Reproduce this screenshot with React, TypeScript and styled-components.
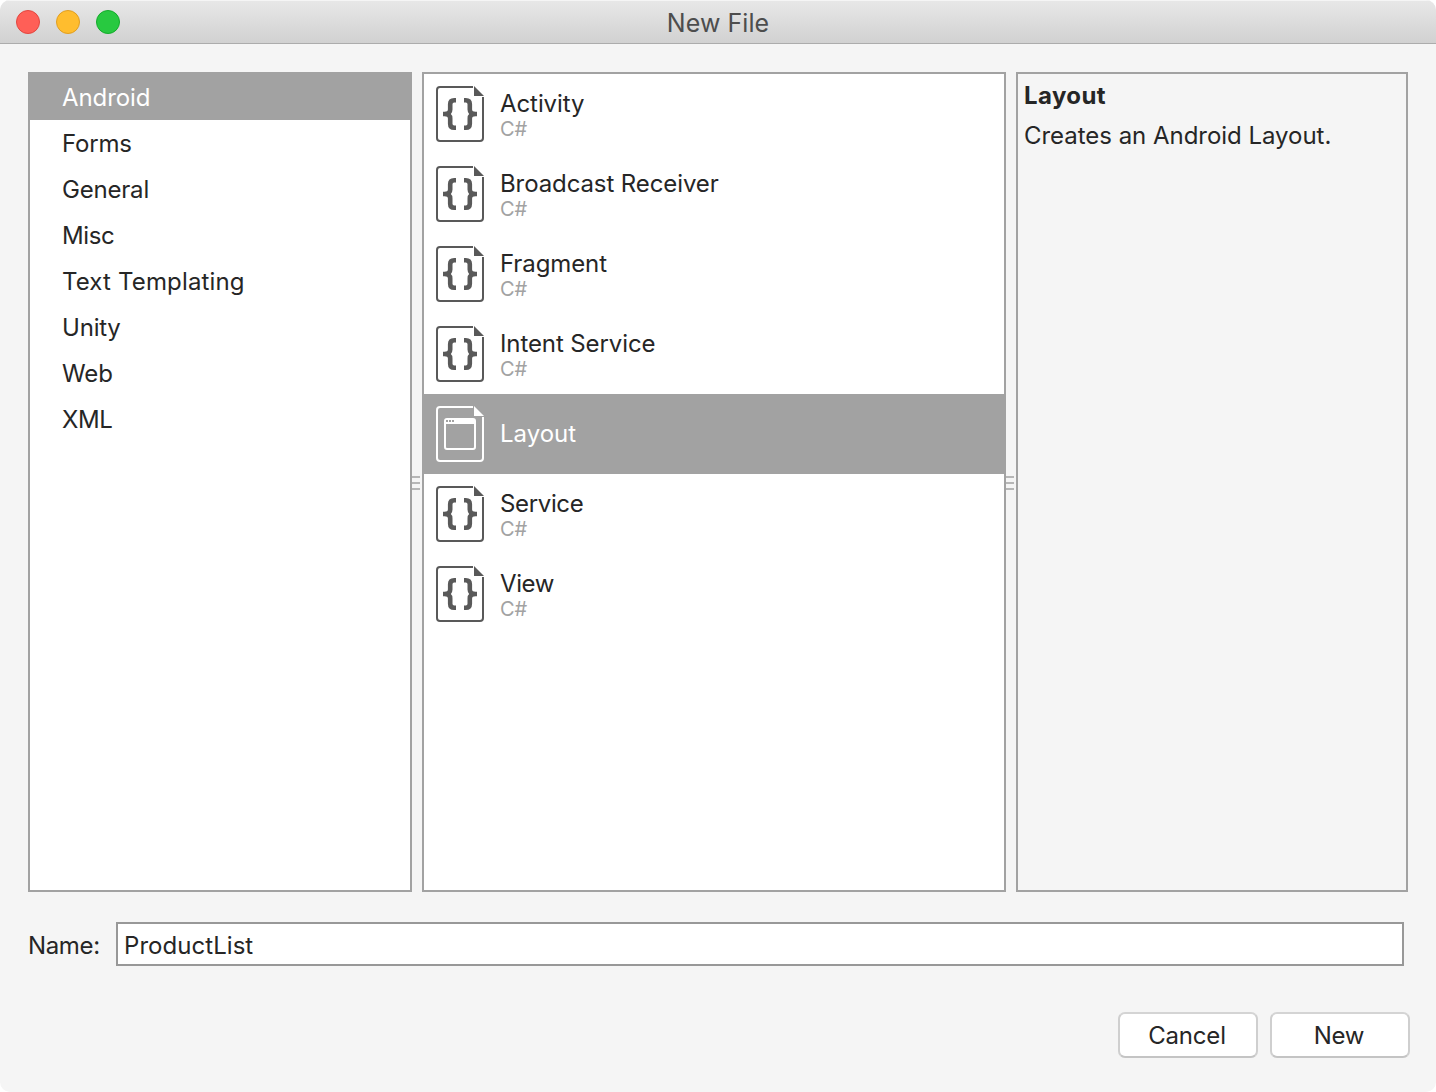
import React, { useState } from 'react';
import styled, { createGlobalStyle, css } from 'styled-components';

const GlobalStyle = createGlobalStyle`
  html, body { margin: 0; background: #fff; }
  *, *::before, *::after { box-sizing: border-box; }
`;

const Window = styled.div`
  display: flex;
  flex-direction: column;
  width: 1436px;
  height: 1092px;
  overflow: hidden;
  border-radius: 10px;
  background: #f5f5f5;
  color: #262626;
  font: 430 24px/30px Inter, sans-serif;
`;

const TitleBar = styled.header`
  display: grid;
  grid-template-columns: 1fr auto 1fr;
  align-items: center;
  flex: none;
  height: 44px;
  padding: 0 16px;
  border-bottom: 1px solid #acacac;
  background: linear-gradient(#e8e8e8, #d1d1d1);
  box-shadow: inset 0 1px #f5f5f5;
`;

const Lights = styled.div`
  display: flex;
  gap: 16px;
`;

const Light = styled.span<{ $fill: string; $edge: string }>`
  width: 24px;
  height: 24px;
  border-radius: 50%;
  border: 1px solid ${(p) => p.$edge};
  background: ${(p) => p.$fill};
`;

const Label = styled.span<{ $spacing?: number }>`
  white-space: nowrap;
  letter-spacing: ${(p) => p.$spacing ?? 0}px;
`;

const Title = styled.h1`
  margin: 2px 0 0;
  font-size: 25px;
  line-height: 30px;
  font-weight: 430;
  color: #4d4d4d;
`;

const Panels = styled.main`
  display: flex;
  flex: none;
  height: 820px;
  margin: 28px 28px 0;
`;

const Panel = styled.section<{ $width: number; $plain?: boolean }>`
  flex: none;
  width: ${(p) => p.$width}px;
  border: 2px solid #a2a2a2;
  background: ${(p) => (p.$plain ? 'transparent' : '#fff')};
`;

const Splitter = styled.div`
  display: flex;
  flex-direction: column;
  gap: 4px;
  width: 10px;
  padding-top: 404px;
`;

const Grip = styled.i`
  width: 8px;
  height: 2px;
  background: #b6b6b6;
`;

const selected = css`
  background: #a2a2a2;
  color: #fff;
`;

const Category = styled.div<{ $selected: boolean }>`
  display: flex;
  align-items: center;
  height: 46px;
  padding: 1px 0 0 32px;
  ${(p) => p.$selected && selected}
`;

const Template = styled.div<{ $selected: boolean }>`
  display: flex;
  align-items: center;
  gap: 16px;
  height: 80px;
  padding-left: 12px;
  ${(p) => p.$selected && selected}
`;

const TemplateText = styled.div<{ $stacked: boolean }>`
  display: flex;
  flex-direction: column;
  padding-top: ${(p) => (p.$stacked ? 2 : 0)}px;
`;

const Language = styled.span`
  margin-top: -2px;
  font-size: 20px;
  line-height: 24px;
  letter-spacing: -0.2px;
  color: #a2a2a2;
`;

const Details = styled.div`
  display: flex;
  flex-direction: column;
  gap: 10px;
  padding: 7px 6px;
`;

const Heading = styled.h2`
  margin: 0;
  font-size: 24px;
  line-height: 30px;
  font-weight: 700;
`;

const NameRow = styled.label`
  display: flex;
  align-items: center;
  justify-content: space-between;
  flex: none;
  height: 44px;
  margin: 30px 32px 0 28px;
`;

const NameCaption = styled.span`
  padding-top: 3px;
  letter-spacing: -0.35px;
`;

const NameInput = styled.input`
  width: 1288px;
  height: 44px;
  padding: 2px 6px 0;
  border: 2px solid #989898;
  border-radius: 0;
  outline: none;
  background: #fff;
  color: inherit;
  font: inherit;
  letter-spacing: 0.05px;
`;

const Actions = styled.footer`
  display: flex;
  justify-content: flex-end;
  gap: 12px;
  margin: 46px 26px 0;
`;

const Button = styled.button`
  width: 140px;
  height: 46px;
  padding: 2px 2px 0 0;
  border: 2px solid #cfcfcf;
  border-top-color: #d4d4d4;
  border-bottom-color: #c4c4c4;
  border-radius: 7px;
  background: #fff;
  color: inherit;
  font: inherit;
`;

const FileIcon = ({ layout }: { layout: boolean }) => (
  <svg width="48" height="56" viewBox="0 0 48 56" fill="none">
    <g stroke={layout ? '#fff' : '#595959'} strokeWidth="2">
      <path d="M37 1H4Q1 1 1 4V52Q1 55 4 55H44Q47 55 47 52V11" />
      <path d="M38 0V10H48Z" fill={layout ? '#fff' : '#595959'} stroke="none" />
      {layout ? (
        <>
          <rect x="9" y="13" width="30" height="30" rx="2" />
          <path d="M9.5 15.5H38.5" strokeWidth="5" />
          <path d="M10 15H18" stroke="#a2a2a2" strokeDasharray="2 1" />
        </>
      ) : (
        <g strokeWidth="4.6">
          <path d="M20 14.3H18.2Q14.2 14.3 14.2 18.3V23.5Q14.2 28 8.5 28H7H8.5Q14.2 28 14.2 32.5V37.7Q14.2 41.7 18.2 41.7H20" />
          <path d="M28 14.3H29.8Q33.8 14.3 33.8 18.3V23.5Q33.8 28 39.5 28H41H39.5Q33.8 28 33.8 32.5V37.7Q33.8 41.7 29.8 41.7H28" />
        </g>
      )}
    </g>
  </svg>
);

const categories: [string, number][] = [
  ['Android', -0.08],
  ['Forms', -0.2],
  ['General', -0.2],
  ['Misc', -0.35],
  ['Text Templating', 0.15],
  ['Unity', -0.2],
  ['Web', -0.1],
  ['XML', -0.4],
];

const templates: [string, string, number][] = [
  ['Activity', 'C#', -0.08],
  ['Broadcast Receiver', 'C#', -0.1],
  ['Fragment', 'C#', -0.1],
  ['Intent Service', 'C#', -0.1],
  ['Layout', '', 0],
  ['Service', 'C#', -0.35],
  ['View', 'C#', -0.4],
];

const Divider = () => (
  <Splitter>
    <Grip />
    <Grip />
    <Grip />
  </Splitter>
);

export default function App() {
  const [category, setCategory] = useState('Android');
  const [template, setTemplate] = useState('Layout');
  const [name, setName] = useState('ProductList');

  return (
    <>
      <GlobalStyle />
      <Window>
        <TitleBar>
          <Lights>
            <Light $fill="#ff5f57" $edge="#e2463f" />
            <Light $fill="#ffbd2e" $edge="#e09e20" />
            <Light $fill="#28c940" $edge="#14ab2b" />
          </Lights>
          <Title><Label $spacing={0.05}>New File</Label></Title>
        </TitleBar>
        <Panels>
          <Panel $width={384}>
            {categories.map(([label, spacing]) => (
              <Category key={label} $selected={label === category} onClick={() => setCategory(label)}>
                <Label $spacing={spacing}>{label}</Label>
              </Category>
            ))}
          </Panel>
          <Divider />
          <Panel $width={584}>
            {templates.map(([label, language, spacing]) => (
              <Template key={label} $selected={label === template} onClick={() => setTemplate(label)}>
                <FileIcon layout={label === 'Layout'} />
                <TemplateText $stacked={language !== ''}>
                  <Label $spacing={spacing}>{label}</Label>
                  {language && <Language>{language}</Language>}
                </TemplateText>
              </Template>
            ))}
          </Panel>
          <Divider />
          <Panel $width={392} $plain>
            <Details>
              <Heading><Label $spacing={0.4}>Layout</Label></Heading>
              <Label $spacing={-0.03}>Creates an Android Layout.</Label>
            </Details>
          </Panel>
        </Panels>
        <NameRow>
          <NameCaption>Name:</NameCaption>
          <NameInput value={name} onChange={(e) => setName(e.target.value)} />
        </NameRow>
        <Actions>
          <Button><Label $spacing={-0.2}>Cancel</Label></Button>
          <Button><Label $spacing={-0.3}>New</Label></Button>
        </Actions>
      </Window>
    </>
  );
}
